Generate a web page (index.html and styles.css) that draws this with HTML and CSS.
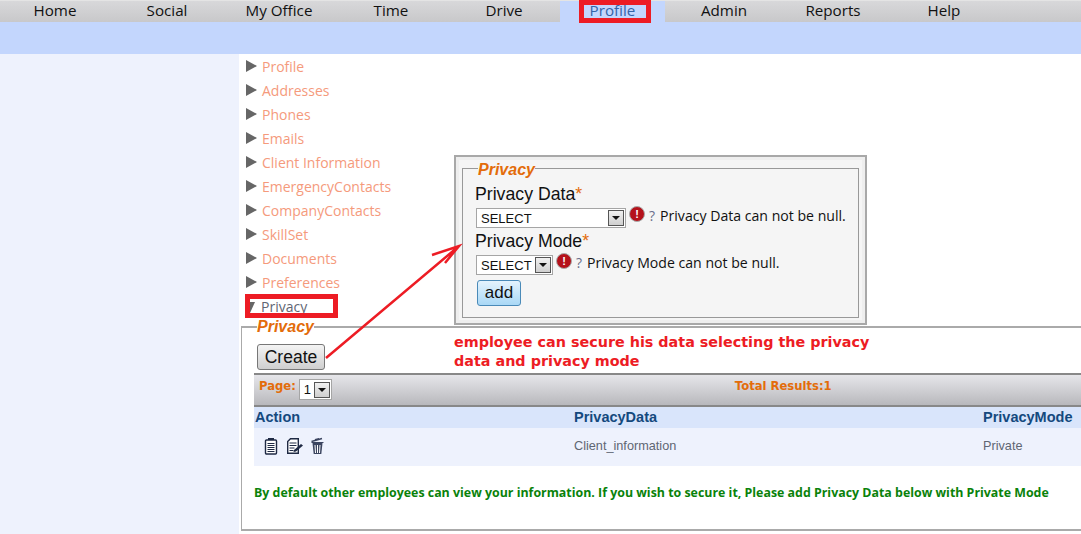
FILE: index.html
```html
<!DOCTYPE html>
<html lang="en">
<head>
    <meta charset="UTF-8">
    <meta name="viewport" content="width=device-width, initial-scale=1.0">
    <title>Profile - Privacy</title>
    <link rel="stylesheet" href="styles.css">
</head>
<body>
    <nav class="topnav">
        <a>Home</a>
        <a>Social</a>
        <a>My Office</a>
        <a>Time</a>
        <a>Drive</a>
        <a class="active">Profile</a>
        <a>Admin</a>
        <a>Reports</a>
        <a>Help</a>
    </nav>
    <div class="subbar"></div>

    <div class="page">
        <aside class="sidebar"></aside>
        <main class="content">
            <ul class="accordion">
                <li><span class="tri"></span>Profile</li>
                <li><span class="tri"></span>Addresses</li>
                <li><span class="tri"></span>Phones</li>
                <li><span class="tri"></span>Emails</li>
                <li><span class="tri"></span>Client Information</li>
                <li><span class="tri"></span>EmergencyContacts</li>
                <li><span class="tri"></span>CompanyContacts</li>
                <li><span class="tri"></span>SkillSet</li>
                <li><span class="tri"></span>Documents</li>
                <li><span class="tri"></span>Preferences</li>
                <li class="open"><span class="tri"></span>Privacy</li>
            </ul>

            <fieldset class="section">
                <legend>Privacy</legend>
                <button class="create-btn" type="button">Create</button>
                <div class="pager">
                    <span class="pager-page">Page:</span>
                    <span class="select select-page"><span class="select-text">1</span><span class="select-arrow"></span></span>
                    <span class="pager-total">Total Results:1</span>
                </div>
                <div class="row row-head">
                    <span>Action</span>
                    <span>PrivacyData</span>
                    <span>PrivacyMode</span>
                </div>
                <div class="row row-data">
                    <span class="actions">
                        <svg width="14" height="18" viewBox="0 0 14 18"><path d="M4 1h6v3H4z" fill="#1f2a44"/><rect x="1.500" y="3" width="11" height="14" rx="1" fill="#fff" stroke="#1f2a44" stroke-width="1.400"/><path d="M3.500 6.500h7M3.500 8.500h7M3.500 10.500h7M3.500 12.500h7M3.500 14.500h7" stroke="#1f2a44"/></svg>
                        <svg width="17" height="18" viewBox="0 0 17 18"><path d="M1.700 16.300V4.500L4.500 1.700h7.800v14.600z" fill="#fff" stroke="#1f2a44" stroke-width="1.400"/><path d="M3.500 6h7M3.500 8.500h7M3.500 11h5M3.500 13.500h4" stroke="#1f2a44"/><path d="M8 13l7-6 2 1.500-7 6-2.500.5z" fill="#1f2a44"/></svg>
                        <svg width="13" height="18" viewBox="0 0 13 18"><path d="M1.500 6h10l-1.200 11H2.700z" fill="#3b4560"/><path d="M4 8l.5 8M6.500 8v8M9 8l-.5 8" stroke="#fff"/><path d="M.5 4.500L11 1.500M4 2.800l4-1" stroke="#3b4560" stroke-width="1.400"/><path d="M.5 5.500h12" stroke="#3b4560"/></svg>
                    </span>
                    <span>Client_information</span>
                    <span>Private</span>
                </div>
                <p class="note">By default other employees can view your information. If you wish to secure it, Please add Privacy Data below with Private Mode</p>
            </fieldset>
        </main>
    </div>

    <!-- things drawn on top of the screenshot -->
    <div class="popup">
        <fieldset class="popup-form">
            <legend>Privacy</legend>
            <div class="field-label">Privacy Data<span class="req">*</span></div>
            <div class="field">
                <span class="select select-data"><span class="select-text">SELECT</span><span class="select-arrow"></span></span>
                <span class="err-icon">!</span>
                <span class="help">?</span>
                <span class="err-text">Privacy Data can not be null.</span>
            </div>
            <div class="field-label">Privacy Mode<span class="req">*</span></div>
            <div class="field">
                <span class="select select-mode"><span class="select-text">SELECT</span><span class="select-arrow"></span></span>
                <span class="err-icon">!</span>
                <span class="help">?</span>
                <span class="err-text">Privacy Mode can not be null.</span>
            </div>
            <button class="add-btn" type="button">add</button>
        </fieldset>
    </div>

    <p class="callout">employee can secure his data selecting the privacy<br>data and privacy mode</p>

    <div class="mark mark-profile"></div>
    <div class="mark mark-privacy"></div>

    <svg class="arrow" width="1081" height="534" viewBox="0 0 1081 534">
        <path d="M326 358L459 246M432 255L459 246L445 263" fill="none" stroke="#ed1c24" stroke-width="2.500"/>
    </svg>
</body>
</html>
```

FILE: styles.css
```css
html, body {
    margin: 0;
    height: 534px;
    overflow: hidden;
}

body {
    position: relative;
    font-family: "Open Sans", "Noto Sans", sans-serif;
    background: #fff;
}

.topnav {
    display: grid;
    grid-template-columns: 110px 114px 110px 114px 112px 105px 118px 100px 122px;
    height: 22px;
    box-sizing: border-box;
    border-top: 1px solid #e4e4e4;
    background: linear-gradient(#d8d8da, #c8c8ca);
}

.topnav a {
    font-size: 15.200px;
    line-height: 18px;
    text-align: center;
    color: #111;
}

.topnav a.active {
    background: #c3d6fd;
    color: #3464a8;
}

.subbar {
    height: 32px;
    background: #c3d6fd;
}

.page {
    display: flex;
    height: 480px;
}

.sidebar {
    width: 239px;
    flex: none;
    background: #eef2fd;
}

.content {
    flex: 1;
    min-width: 0;
    padding-left: 2px;
}

.accordion {
    list-style: none;
    margin: 0;
    padding: 1px 0 0 5px;
    height: 263px;
}

.accordion li {
    height: 24px;
    line-height: 23px;
    font-size: 14px;
    color: #f59a7c;
}

.accordion li.open {
    color: #5f6673;
}

.tri {
    display: inline-block;
    width: 0;
    height: 0;
    margin-right: 5px;
    border-left: 11px solid #666;
    border-top: 6px solid transparent;
    border-bottom: 6px solid transparent;
    vertical-align: 0;
}

.open .tri {
    width: 0;
    margin-left: -1px;
    border-left: 5.500px solid transparent;
    border-right: 5.500px solid transparent;
    border-top: 11px solid #666;
    border-bottom: 0;
    margin-right: 6px;
    vertical-align: -1px;
}

.section {
    margin: 0;
    padding: 0 0 0 12px;
    box-sizing: border-box;
    height: 213px;
    border: 1px solid #aaa;
    border-width: 2px 0 2px 1px;
}

.section legend,
.popup-form legend {
    margin-left: 3px;
    padding: 0;
    font: italic bold 16px "Liberation Sans", Arial, sans-serif;
    color: #e36c0a;
}

.popup-form legend {
    padding-top: 4px;
}

.create-btn {
    display: block;
    width: 68px;
    height: 26px;
    margin: 8px 0 3px 3px;
    padding: 0;
    border: 1px solid #777;
    border-radius: 3px;
    background: linear-gradient(#f4f4f4, #cfcfcf);
    font: 17.500px "Liberation Sans", Arial, sans-serif;
    color: #111;
}

.pager {
    display: flex;
    align-items: center;
    height: 34px;
    box-sizing: border-box;
    border-top: 2px solid #888;
    border-bottom: 2px solid #888;
    padding-left: 5px;
    background: linear-gradient(#e6e6ea, #b8b8bc);
    font: bold 11.600px "DejaVu Sans", Verdana, sans-serif;
    color: #e36c0a;
}

.pager-page {
    margin-right: 3px;
    margin-top: -9px;
}

.pager-total {
    margin-left: 403px;
    margin-top: -9px;
}

.row {
    display: grid;
    grid-template-columns: 319px 409px 1fr;
    padding-left: 1px;
    font-family: "Liberation Sans", Arial, sans-serif;
}

.row-head {
    height: 21px;
    line-height: 21px;
    background: #d9e5fb;
    font-size: 14.500px;
    font-weight: bold;
    color: #14497e;
}

.row-data {
    height: 38px;
    line-height: 37px;
    background: #eef2fd;
    font-size: 12.700px;
    color: #5f6673;
}

.actions {
    display: flex;
    align-items: center;
    gap: 8px;
    padding-left: 9px;
    margin-top: -2px;
}

.note {
    margin: 18px 0 0;
    font: bold 12.400px "Open Sans", sans-serif;
    color: #0a820a;
    white-space: nowrap;
}

.select {
    display: inline-flex;
    align-items: center;
    box-sizing: border-box;
    height: 20px;
    border: 1px solid #a5a5a5;
    background: #fff;
    font: 13px "Liberation Sans", Arial, sans-serif;
    color: #111;
}

.select-text {
    flex: 1;
    padding-left: 4px;
}

.select-arrow {
    position: relative;
    width: 16px;
    height: 16px;
    flex: none;
    box-sizing: border-box;
    border: 1px solid #555;
    margin-right: 1px;
    background: linear-gradient(#f0f0f0, #cfcfcf);
}

.select-arrow::after {
    content: "";
    position: absolute;
    left: 3px;
    top: 5px;
    border-left: 4px solid transparent;
    border-right: 4px solid transparent;
    border-top: 4px solid #111;
}

.select-page {
    width: 33px;
    height: 21px;
    margin-top: -1px;
}

.select-data {
    width: 150px;
}

.select-mode {
    width: 77px;
}

.popup {
    position: absolute;
    left: 454px;
    top: 155px;
    width: 413px;
    height: 170px;
    box-sizing: border-box;
    border: 2px solid #a8a8a8;
    padding: 0 6px 5px;
    background: #f5f5f5;
    box-shadow: inset 0 0 0 3px #eeeeee;
}

.popup-form {
    margin: 0;
    height: 100%;
    box-sizing: border-box;
    padding: 0 0 0 12px;
    border: 1px solid #999;
    font-family: "Liberation Sans", Arial, sans-serif;
}

.field-label {
    font-size: 17.700px;
    line-height: 24px;
    color: #111;
}

.popup-form legend + .field-label {
    margin-top: 3px;
}

.req {
    color: #e36c0a;
}

.field {
    display: flex;
    align-items: flex-start;
    height: 21px;
    padding-left: 1px;
    margin-top: 2px;
}

.err-icon {
    width: 14px;
    height: 14px;
    margin: -2px 0 0 3px;
    border: 1px solid #aaa;
    border-radius: 50%;
    background: #b5121b;
    color: #fff;
    font: bold 11px/14px "Liberation Sans", Arial, sans-serif;
    text-align: center;
}

.help {
    margin-left: 4px;
    font: 14px/15px "Open Sans", sans-serif;
    color: #6a6f8a;
}

.err-text {
    margin-left: 5px;
    font: 14.100px/15px "Open Sans", sans-serif;
    color: #111;
}

.add-btn {
    display: block;
    width: 44px;
    height: 26px;
    margin: 4px 0 0 2px;
    padding: 0;
    border: 1px solid #4a8ab8;
    border-radius: 3px;
    background: linear-gradient(#e4f3fd, #a9d8f6);
    font: 17px "Liberation Sans", Arial, sans-serif;
    color: #111;
}

.callout {
    position: absolute;
    left: 454px;
    top: 333px;
    margin: 0;
    font: bold 14.350px/19px "DejaVu Sans", Verdana, sans-serif;
    color: #ed1c24;
}

.mark {
    position: absolute;
    box-sizing: border-box;
    border: 5px solid #ed1c24;
}

.mark-profile {
    left: 579px;
    top: 0;
    width: 72px;
    height: 23px;
}

.mark-privacy {
    left: 245px;
    top: 294px;
    width: 93px;
    height: 24px;
}

.arrow {
    position: absolute;
    left: 0;
    top: 0;
    pointer-events: none;
}
```
